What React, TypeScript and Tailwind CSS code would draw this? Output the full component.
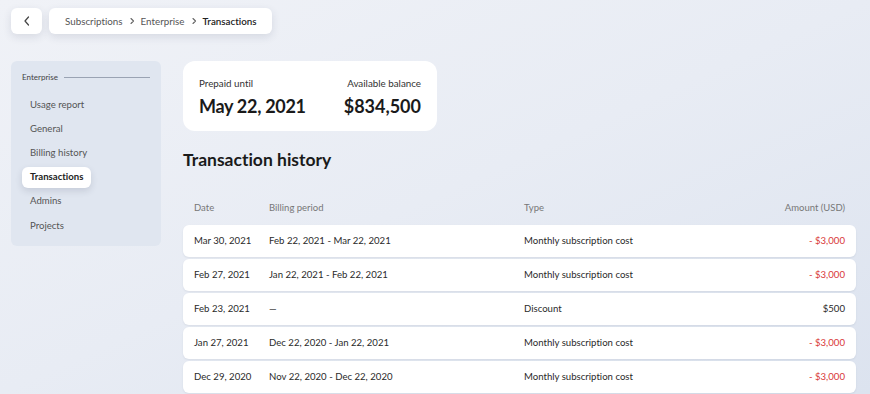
import React from 'react';

const navItems = ['Usage report', 'General', 'Billing history', 'Transactions', 'Admins', 'Projects'];

const transactions = [
  { date: 'Mar 30, 2021', period: 'Feb 22, 2021 - Mar 22, 2021', type: 'Monthly subscription cost', amount: '- $3,000', negative: true },
  { date: 'Feb 27, 2021', period: 'Jan 22, 2021 - Feb 22, 2021', type: 'Monthly subscription cost', amount: '- $3,000', negative: true },
  { date: 'Feb 23, 2021', period: '—', type: 'Discount', amount: '$500', negative: false },
  { date: 'Jan 27, 2021', period: 'Dec 22, 2020 - Jan 22, 2021', type: 'Monthly subscription cost', amount: '- $3,000', negative: true },
  { date: 'Dec 29, 2020', period: 'Nov 22, 2020 - Dec 22, 2020', type: 'Monthly subscription cost', amount: '- $3,000', negative: true },
];

const Chevron = ({ className = '' }: { className?: string }) => (
  <svg width="8" height="8" viewBox="0 0 8 8" fill="none" stroke="currentColor" strokeWidth="1.1" strokeLinecap="round" strokeLinejoin="round" className={className}>
    <path d="M3 1.5 5.5 4 3 6.5" />
  </svg>
);

export default function App() {
  return (
    <div className="w-[870px] h-[394px] overflow-hidden bg-gradient-to-br from-[#f0f2f7] via-[#e8ecf4] to-[#dce3ef] font-['Lato',sans-serif] [font-variant-ligatures:none] text-[#222]">
      {/* top bar */}
      <div className="flex items-center gap-[7px] pl-[11px] pt-[8px]">
        <button className="w-[31px] h-[26px] bg-white rounded-md shadow-[0_3px_8px_rgba(40,50,80,0.12)] flex items-center justify-center text-[#444]">
          <svg width="10" height="12" viewBox="0 0 10 12" fill="none" stroke="currentColor" strokeWidth="1.2" strokeLinecap="round" strokeLinejoin="round">
            <path d="M6.5 2 3 6l3.5 4" />
          </svg>
        </button>
        <div className="h-[26px] bg-white rounded-md shadow-[0_3px_8px_rgba(40,50,80,0.12)] flex items-center gap-[5px] pl-[16px] pr-[15px] text-[9.8px]">
          <span className="text-[#555]">Subscriptions</span>
          <Chevron className="text-[#666]" />
          <span className="text-[#555]">Enterprise</span>
          <Chevron className="text-[#666]" />
          <span className="text-[#222] font-semibold">Transactions</span>
        </div>
      </div>

      <div className="flex gap-[22px] pl-[11px] mt-[27px]">
        {/* sidebar */}
        <aside className="w-[150px] h-[185px] shrink-0 bg-[#e0e6f0] rounded-md px-[11px] pt-[11px]">
          <div className="flex items-center gap-[6px] text-[8px] text-[#444] h-[10px]">
            <span>Enterprise</span>
            <div className="flex-1 h-px bg-[#9aa3b3]" />
          </div>
          <nav className="mt-[11px] flex flex-col">
            {navItems.map((item) => (
              <div
                key={item}
                className={
                  item === 'Transactions'
                    ? 'h-[21px] my-[1.5px] self-start flex items-center px-[8px] bg-white rounded-md shadow-[0_3px_7px_rgba(40,50,80,0.14)] text-[9.6px] font-bold text-[#222]'
                    : 'h-[24.2px] flex items-center px-[8px] text-[9.6px] text-[#555]'
                }
              >
                {item}
              </div>
            ))}
          </nav>
        </aside>

        {/* main */}
        <main className="w-[673px]">
          <div className="w-[254px] h-[70px] bg-white rounded-xl px-[16px] pt-[15px] flex justify-between">
            <div>
              <div className="text-[9.8px] text-[#333]">Prepaid until</div>
              <div className="text-[18px] font-bold leading-[22px] mt-[4px] tracking-[-0.3px] text-[#1a1a1a]">May 22, 2021</div>
            </div>
            <div className="text-right">
              <div className="text-[9.8px] text-[#333]">Available balance</div>
              <div className="text-[18px] font-bold leading-[22px] mt-[4px] text-[#1a1a1a]">$834,500</div>
            </div>
          </div>

          <h2 className="mt-[17px] text-[17.5px] font-bold text-[#1a1a1a] leading-[24px]">Transaction history</h2>

          <div className="mt-[27px] grid grid-cols-[75px_255px_1fr_auto] px-[11px] h-[18px] items-center text-[9.5px] text-[#777]">
            <span>Date</span>
            <span>Billing period</span>
            <span>Type</span>
            <span className="text-right">Amount (USD)</span>
          </div>

          <div className="mt-[8px] flex flex-col gap-[2px]">
            {transactions.map((t) => (
              <div
                key={t.date}
                className="h-[32px] bg-white rounded-md grid grid-cols-[75px_255px_1fr_auto] items-center px-[11px] text-[9.6px] text-[#2a2a2a] shadow-[0_1px_2px_rgba(40,50,80,0.08)]"
              >
                <span>{t.date}</span>
                <span>{t.period}</span>
                <span>{t.type}</span>
                <span className={t.negative ? 'text-right text-[#d93838]' : 'text-right text-[#2a2a2a]'}>{t.amount}</span>
              </div>
            ))}
          </div>
        </main>
      </div>
    </div>
  );
}
